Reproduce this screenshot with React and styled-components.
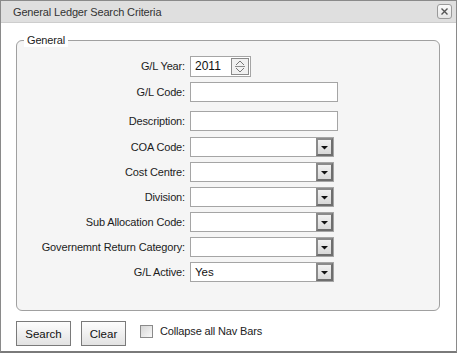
import React, { useState } from 'react';
import styled, { createGlobalStyle } from 'styled-components';

const GlobalStyle = createGlobalStyle`
  html, body {
    margin: 0;
    padding: 0;
    background: #ffffff;
  }
  body {
    font-family: "Liberation Sans", Arial, sans-serif;
    font-size: 11px;
    letter-spacing: -0.15px;
    color: #222;
  }
`;

const Window = styled.div`
  box-sizing: border-box;
  width: 457px;
  height: 353px;
  border: 1px solid #8a8a8a;
  border-bottom: 2px solid #7a7a7a;
  background: #fff;
  display: flex;
  flex-direction: column;
`;

const TitleBar = styled.div`
  height: 21px;
  flex: none;
  background: #dfdfdf;
  border-bottom: 1px solid #cdcdcd;
  display: flex;
  align-items: center;
  justify-content: space-between;
  padding: 0 4px 0 12px;
  color: #333;
  font-size: 11px;
`;

const CloseButton = styled.button`
  box-sizing: border-box;
  width: 15px;
  height: 15px;
  padding: 0;
  border: 1px solid #9a9a9a;
  border-radius: 3px;
  background: linear-gradient(#fafafa, #e6e6e6);
  display: flex;
  align-items: center;
  justify-content: center;
`;

const Body = styled.div`
  padding: 10px 16px 0 15px;
`;

const Fieldset = styled.fieldset`
  box-sizing: border-box;
  height: 278px;
  margin: 0;
  padding: 9px 0 0 0;
  border: 1px solid #a0a0a0;
  border-radius: 6px;
  background: #f5f5f5;
`;

const Legend = styled.legend`
  margin-left: 7px;
  padding: 0 3px;
  color: #222;
  background: #fff;
  font-size: 11px;
  line-height: 14px;
`;

const Row = styled.div`
  display: flex;
  align-items: center;
  height: 20px;
  margin-top: ${p => p.$gap}px;
`;

const Label = styled.label`
  width: 168px;
  flex: none;
  text-align: right;
  padding-right: 5px;
  color: #1c1c1c;
  font-size: 11px;
`;

const TextInput = styled.input`
  box-sizing: border-box;
  width: 148px;
  height: 20px;
  margin: 0;
  padding: 0 3px;
  border: 1px solid #a5a5a5;
  background: #fff;
  font-family: inherit;
  font-size: 11px;
  outline: none;
`;

const Spinner = styled.div`
  box-sizing: border-box;
  display: flex;
  align-items: center;
  width: 61px;
  height: 21px;
  border: 1px solid #a5a5a5;
  background: #fff;
  padding: 0 1px 0 4px;
  font-size: 12px;
  letter-spacing: 0;
  color: #111;
  justify-content: space-between;
`;

const SpinButton = styled.div`
  box-sizing: border-box;
  width: 18px;
  height: 17px;
  border: 1px solid #8a8a8a;
  background: #f0f0f0;
  display: flex;
  flex-direction: column;
  align-items: center;
  justify-content: center;
`;

const Select = styled.div`
  box-sizing: border-box;
  width: 144px;
  height: 20px;
  border: 1px solid #a5a5a5;
  background: #fff;
  display: flex;
  align-items: center;
  justify-content: space-between;
  padding-left: 4px;
  font-size: 11.5px;
  letter-spacing: 0;
  color: #111;
`;

const DropButton = styled.div`
  box-sizing: border-box;
  width: 17px;
  height: 18px;
  border: 2px solid #6e6e6e;
  border-top-color: #8a8a8a;
  border-left-color: #8a8a8a;
  background: linear-gradient(#f2f2f2, #d8d8d8);
  display: flex;
  align-items: center;
  justify-content: center;
`;

const Footer = styled.div`
  display: flex;
  align-items: center;
  padding: 10px 0 0 15px;
`;

const Button = styled.button`
  box-sizing: border-box;
  height: 25px;
  width: ${p => p.$w}px;
  margin-right: ${p => p.$mr}px;
  padding: 0;
  border: 1px solid #7a7a7a;
  background: linear-gradient(#fdfdfd 0%, #f0f0f0 50%, #e2e2e2 100%);
  font-family: inherit;
  font-size: 11.5px;
  letter-spacing: 0;
  color: #111;
`;

const CheckLabel = styled.label`
  display: flex;
  align-items: center;
  margin-top: -5px;
  color: #222;
  font-size: 11px;
`;

const CheckBox = styled.span`
  box-sizing: border-box;
  width: 13px;
  height: 13px;
  margin-right: 7px;
  border: 1px solid #8a8a8a;
  background: linear-gradient(135deg, #d6d6d6, #f8f8f8);
`;

const Arrow = () => (
  <svg width="9" height="5" viewBox="0 0 9 5">
    <path d="M1 1h7L4.5 4.5z" fill="#111" />
  </svg>
);

const fields = [
  { label: 'COA Code:', gap: 6 },
  { label: 'Cost Centre:', gap: 5 },
  { label: 'Division:', gap: 5 },
  { label: 'Sub Allocation Code:', gap: 5 },
  { label: 'Governemnt Return Category:', gap: 5 },
  { label: 'G/L Active:', gap: 5, value: 'Yes' },
];

const App = () => {
  const [code, setCode] = useState('');
  const [desc, setDesc] = useState('');

  return (
    <>
      <GlobalStyle />
      <Window>
        <TitleBar>
          <span>General Ledger Search Criteria</span>
          <CloseButton aria-label="Close">
            <svg width="7" height="7" viewBox="0 0 7 7">
              <path d="M0.5 0.5l6 6M6.5 0.5l-6 6" stroke="#555" strokeWidth="1.4" />
            </svg>
          </CloseButton>
        </TitleBar>
        <Body>
          <Fieldset>
            <Legend>General</Legend>
            <Row $gap={0}>
              <Label>G/L Year:</Label>
              <Spinner>
                <span>2011</span>
                <SpinButton>
                  <svg width="10" height="13" viewBox="0 0 10 13">
                    <path d="M1 5l4-4 4 4M1 8l4 4 4-4" stroke="#777" fill="none" />
                    <path d="M0 6.5h10" stroke="#8a8a8a" />
                  </svg>
                </SpinButton>
              </Spinner>
            </Row>
            <Row $gap={6}>
              <Label>G/L Code:</Label>
              <TextInput value={code} onChange={e => setCode(e.target.value)} />
            </Row>
            <Row $gap={9}>
              <Label>Description:</Label>
              <TextInput value={desc} onChange={e => setDesc(e.target.value)} />
            </Row>
            {fields.map(f => (
              <Row key={f.label} $gap={f.gap}>
                <Label>{f.label}</Label>
                <Select>
                  <span>{f.value || ''}</span>
                  <DropButton><Arrow /></DropButton>
                </Select>
              </Row>
            ))}
          </Fieldset>
        </Body>
        <Footer>
          <Button $w={55} $mr={10}>Search</Button>
          <Button $w={45} $mr={14}>Clear</Button>
          <CheckLabel>
            <CheckBox />
            Collapse all Nav Bars
          </CheckLabel>
        </Footer>
      </Window>
    </>
  );
};

export default App;
